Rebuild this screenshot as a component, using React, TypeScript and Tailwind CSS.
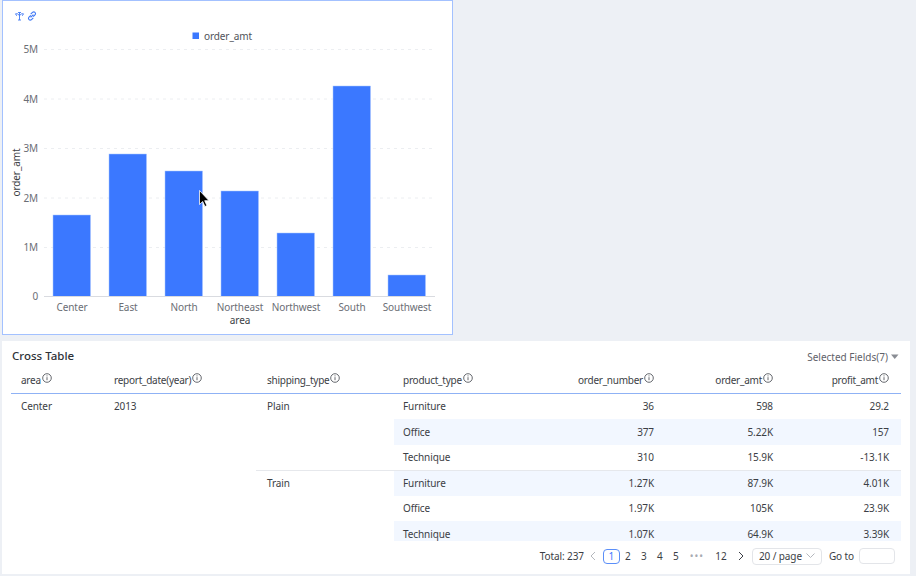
import React from "react";

const FONT = '"Noto Sans", "Open Sans", sans-serif';

const bars: [string, number, number][] = [
  ["Center", 53, 215],
  ["East", 109, 154],
  ["North", 165, 171],
  ["Northeast", 221, 191],
  ["Northwest", 277, 233],
  ["South", 333, 86],
  ["Southwest", 388, 275],
];

const ticks: [string, number][] = [
  ["5M", 49.5],
  ["4M", 99],
  ["3M", 148.5],
  ["2M", 198],
  ["1M", 247.5],
];

function Chart() {
  return (
    <svg width="449" height="333" viewBox="0 0 449 333" className="block" style={{ fontFamily: FONT, letterSpacing: "-0.1px" }}>
      <g transform="translate(-3,-1)">
        {/* toolbar icons */}
        <g fill="none" stroke="#3f78f5" strokeWidth="0.9">
          <path d="M19.5 12.5v7.5M18 12.5h3M18 20h3M15.5 13.8h2.2l1.8 2 1.8-2h2.2M15.5 13.8l1.2 2M23.5 13.8l-1.2 2" />
          <path d="M30.8 15.3l-2 2a1.8 1.8 0 0 0 2.5 2.5l2-2M33.2 16.7l2-2a1.8 1.8 0 0 0 -2.5-2.5l-2 2M30.6 17.4l2.8-2.8" strokeWidth="1.1" />
        </g>
        {/* legend */}
        <rect x="192.5" y="32.5" width="6.5" height="6.5" fill="#3b78ff" />
        <text x="204" y="39.5" fontSize="10" fill="#50535a">order_amt</text>
        {/* grid */}
        {ticks.map(([t, y]) => (
          <g key={t}>
            <line x1="44" x2="435" y1={y} y2={y} stroke="#eceef1" strokeDasharray="3 4" />
            <text x="38" y={y + 3.5} fontSize="10" textAnchor="end" fill="#6b6e75">{t}</text>
          </g>
        ))}
        <text x="38" y="300" fontSize="10" textAnchor="end" fill="#6b6e75">0</text>
        <text transform="translate(19.5,172.5) rotate(-90)" fontSize="10" textAnchor="middle" fill="#3b3e45">order_amt</text>
        {/* bars */}
        {bars.map(([n, x, top]) => (
          <g key={n}>
            <rect x={x} y={top} width="37.5" height={296.5 - top} fill="#3b78ff" stroke="#a9c5ff" strokeWidth="0.5" />
            <text x={x + 19} y="311" fontSize="10" textAnchor="middle" fill="#6b6e75">{n}</text>
          </g>
        ))}
        <line x1="44" x2="435" y1="296.5" y2="296.5" stroke="#d9dbe0" />
        <text x="240" y="324" fontSize="10" textAnchor="middle" fill="#3b3e45">area</text>
        {/* cursor */}
        <path d="M199.5 190.5v14l3.2-3 2.2 5 2-.9-2.2-4.9h4.3z" fill="#000" stroke="#fff" strokeWidth="0.8" />
      </g>
    </svg>
  );
}

function Info() {
  return (
    <svg width="10" height="10" viewBox="0 0 10 10" className="ml-[1px] inline-block align-[1px]" fill="none" stroke="#3f424a" strokeWidth="0.8">
      <circle cx="5" cy="5" r="4.3" />
      <path d="M5 4.2v3M5 2.4v1" />
    </svg>
  );
}

function H({ label, cls }: { label: string; cls: string }) {
  return (
    <th className={`h-[26px] p-0 pt-[2px] font-normal tracking-[-0.25px] ${cls}`}>
      {label}
      <Info />
    </th>
  );
}

function Num({ v }: { v: string }) {
  return <td className="pr-[10px] text-right">{v}</td>;
}

type RowData = [string, string, string, string];

function Cells({ r }: { r: RowData }) {
  return (
    <>
      <td className="pl-[9px]">{r[0]}</td>
      <Num v={r[1]} />
      <Num v={r[2]} />
      <td className="pr-[12px] text-right">{r[3]}</td>
    </>
  );
}

const CrossTable = () => (
  <div className="h-[174px] overflow-hidden pr-[9px] pl-[9px]">
    <table className="w-[890px] table-fixed border-collapse text-[10px] tracking-[-0.1px] text-[#3b3e45]">
      <colgroup>
        <col className="w-[93px]" />
        <col className="w-[152px]" />
        <col className="w-[138px]" />
        <col className="w-[136px]" />
        <col className="w-[134px]" />
        <col className="w-[119px]" />
        <col className="w-[118px]" />
      </colgroup>
      <thead>
        <tr className="border-b border-[#8fb2f5]">
          <H label="area" cls="pl-[10px] text-left" />
          <H label="report_date(year)" cls="pl-[10px] text-left" />
          <H label="shipping_type" cls="pl-[11px] text-left" />
          <H label="product_type" cls="pl-[9px] text-left" />
          <H label="order_number" cls="pr-[10px] text-right" />
          <H label="order_amt" cls="pr-[10px] text-right" />
          <H label="profit_amt" cls="pr-[12px] text-right" />
        </tr>
      </thead>
      <tbody>
        <tr className="h-[26px]">
          <td rowSpan={6} className="pt-[5px] pl-[10px] align-top">Center</td>
          <td rowSpan={6} className="pt-[5px] pl-[10px] align-top">2013</td>
          <td rowSpan={3} className="pt-[5px] pl-[11px] align-top">Plain</td>
          <Cells r={["Furniture", "36", "598", "29.2"]} />
        </tr>
        <tr className="h-[26px] bg-[#f2f7ff]">
          <Cells r={["Office", "377", "5.22K", "157"]} />
        </tr>
        <tr className="h-[25px]">
          <Cells r={["Technique", "310", "15.9K", "-13.1K"]} />
        </tr>
        <tr className="h-[26px] border-t border-[#e6e8ec] bg-[#f2f7ff]">
          <td rowSpan={3} className="bg-white pt-[5px] pl-[11px] align-top">Train</td>
          <Cells r={["Furniture", "1.27K", "87.9K", "4.01K"]} />
        </tr>
        <tr className="h-[25px]">
          <Cells r={["Office", "1.97K", "105K", "23.9K"]} />
        </tr>
        <tr className="h-[26px] bg-[#f2f7ff]">
          <Cells r={["Technique", "1.07K", "64.9K", "3.39K"]} />
        </tr>
      </tbody>
    </table>
  </div>
);

function PageNum({ n, w }: { n: string; w?: string }) {
  return <span className={`text-center ${w ?? "w-4"}`}>{n}</span>;
}

const Pagination = () => (
  <div className="mt-[6px] flex h-[18px] items-center justify-end pr-[15px] text-[10px] tracking-[-0.1px] text-[#3b3e45]">
    <span className="mr-[5px]">Total: 237</span>
    <svg width="8" height="10" viewBox="0 0 8 10" fill="none" stroke="#b4b7bd" className="mr-[6px]">
      <path d="M6 1L2 5l4 4" />
    </svg>
    <span className="flex h-[15px] w-[17px] items-center justify-center rounded-sm border border-[#5b8ff9] text-[#3b78ff]">1</span>
    <PageNum n="2" />
    <PageNum n="3" />
    <PageNum n="4" />
    <PageNum n="5" />
    <span className="w-[26px] text-center tracking-[1px] text-[#a8abb2]">•••</span>
    <PageNum n="12" w="w-[22px] mr-[5px]" />
    <svg width="8" height="10" viewBox="0 0 8 10" fill="none" stroke="#3b3e45" className="mr-[7px]">
      <path d="M2 1l4 4-4 4" />
    </svg>
    <span className="mr-[7px] flex h-[17px] w-[70px] items-center justify-between rounded-sm border border-[#e3e5e9] pr-[6px] pl-[6px]">
      20 / page
      <svg width="9" height="6" viewBox="0 0 9 6" fill="none" stroke="#b4b7bd">
        <path d="M.5.5l4 4 4-4" />
      </svg>
    </span>
    <span className="mr-[5px]">Go to</span>
    <span className="h-[16px] w-[36px] rounded-sm border border-[#e3e5e9]" />
  </div>
);

export default function App() {
  return (
    <div className="h-[576px] w-[916px] overflow-hidden bg-[#edf0f5]" style={{ fontFamily: FONT }}>
      <div className="ml-[2px] h-[335px] w-[451px] border border-[#a3c1ff] bg-white">
        <Chart />
      </div>
      <div className="mt-[6px] ml-[2px] h-[233px] w-[908px] bg-white">
        <div className="flex h-[26px] items-end justify-between pr-[11px] pl-[10px]">
          <span className="mb-[1px] text-[11.5px] leading-[20px] font-medium text-[#2f3238]">Cross Table</span>
          <span className="flex items-center gap-[3px] text-[10px] leading-[20px] text-[#5f6269]">
            Selected Fields(7)
            <svg width="8" height="6" viewBox="0 0 8 6" fill="#8a8d94">
              <path d="M0 .5h7.5L3.75 5z" />
            </svg>
          </span>
        </div>
        <CrossTable />
        <Pagination />
      </div>
    </div>
  );
}
